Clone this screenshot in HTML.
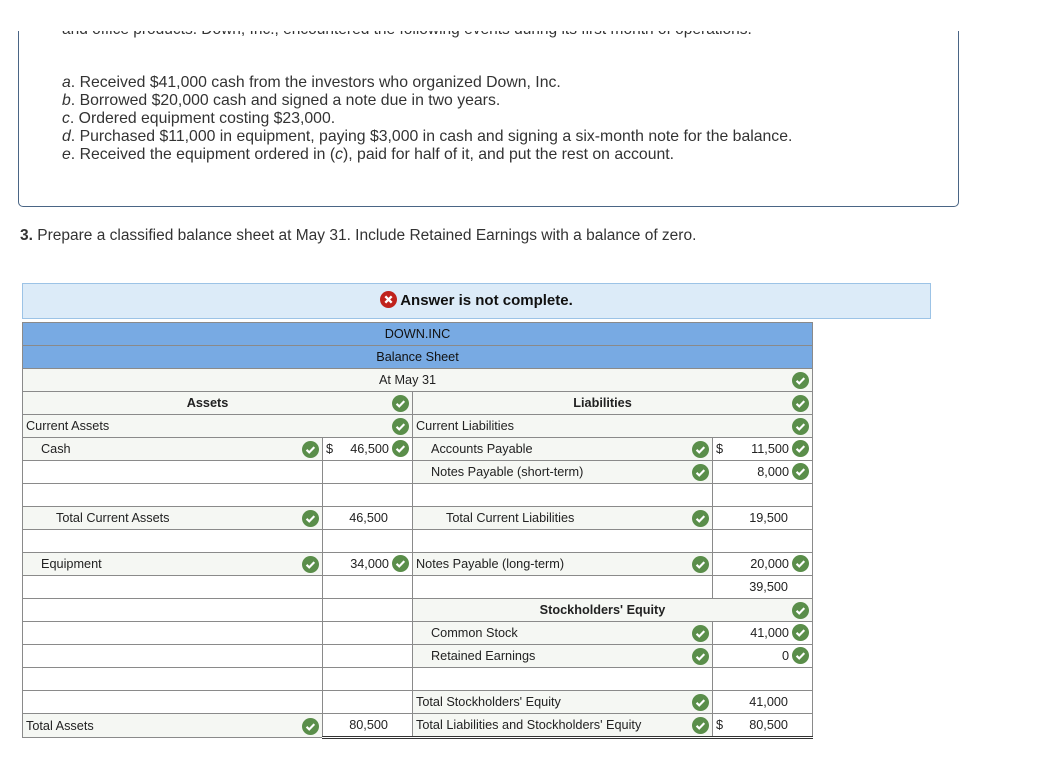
<!DOCTYPE html>
<html><head><meta charset="utf-8"><style>
body{margin:0;width:1048px;height:768px;background:#fff;position:relative;overflow:hidden;font-family:"Liberation Sans",Arial,sans-serif;}
.box{position:absolute;left:18px;top:31px;width:939px;height:175px;border:1px solid #4a6585;border-top:none;border-radius:0 0 5px 5px;overflow:hidden}
.box .cut{position:absolute;left:43px;top:-10px;font-size:15.5px;color:#333;white-space:nowrap}
.items{position:absolute;left:62px;top:74px;font-size:15.8px;line-height:18px;color:#333}
.items i{font-style:italic}
.q{position:absolute;left:20px;top:227px;font-size:15.5px;color:#333}
.ans{position:absolute;left:22px;top:283px;width:907px;height:34px;background:#dcebf8;border:1px solid #9cc3e6;text-align:center;font-size:15px;font-weight:bold;line-height:34px;color:#111}
.ans svg{vertical-align:-3px;margin-right:3px}
table{position:absolute;left:22px;top:322px;border-collapse:collapse;table-layout:fixed;font-size:12.7px;color:#222}
td{border:1px solid #8a8a8a;height:22px;padding:0 3px;white-space:nowrap;overflow:hidden;box-sizing:border-box;line-height:22px}
tr{height:23px}
.blue td{background:#78aae3;text-align:center;color:#111}
.l{background:#f5f7f3}
.c{text-align:center}
.b{font-weight:bold}
.in{padding-left:18px}
.in2{padding-left:33px}
.r{text-align:right;padding-right:24px}
.ri{text-align:right;padding-right:3px}
.ck{display:inline-block;width:17px;height:17px;vertical-align:-4px;margin-left:3px}
.fr{float:right;margin-top:3px}
.d{float:left}
.tt{border-top:1.5px solid #222}
.dd{border-bottom:3px double #333}
</style></head><body>
<div class="box"><div class="cut">and office products. Down, Inc., encountered the following events during its first month of operations.</div></div>
<div class="items">
<div><i>a</i>. Received $41,000 cash from the investors who organized Down, Inc.</div>
<div><i>b</i>. Borrowed $20,000 cash and signed a note due in two years.</div>
<div><i>c</i>. Ordered equipment costing $23,000.</div>
<div><i>d</i>. Purchased $11,000 in equipment, paying $3,000 in cash and signing a six-month note for the balance.</div>
<div><i>e</i>. Received the equipment ordered in (<i>c</i>), paid for half of it, and put the rest on account.</div>
</div>
<div class="q"><b>3.</b> Prepare a classified balance sheet at May 31. Include Retained Earnings with a balance of zero.</div>
<div class="ans"><svg width="17" height="17" viewBox="0 0 16 16"><circle cx="8" cy="8" r="8" fill="#c0221c"/><path d="M5 5l6 6M11 5l-6 6" stroke="#fff" stroke-width="2.2"/></svg>Answer is not complete.</div>

<svg width="0" height="0" style="position:absolute"><defs><symbol id="k" viewBox="0 0 16 16"><circle cx="8" cy="8" r="8" fill="#5a8e4a"/><path d="M4.3 8.3l2.5 2.4 4.8-4.9" stroke="#fff" stroke-width="2" fill="none"/></symbol></defs></svg>

<table>
<colgroup><col style="width:300px"><col style="width:90px"><col style="width:300px"><col style="width:100px"></colgroup>
<tr class="blue"><td colspan="4">DOWN.INC</td></tr>
<tr class="blue"><td colspan="4">Balance Sheet</td></tr>
<tr><td colspan="4" class="l c">At May 31<svg class="ck fr" style="margin-right:0"><use href="#k"/></svg></td></tr>
<tr><td colspan="2" class="l c b">Assets<svg class="ck fr"><use href="#k"/></svg></td><td colspan="2" class="l c b">Liabilities<svg class="ck fr"><use href="#k"/></svg></td></tr>
<tr><td colspan="2" class="l">Current Assets<svg class="ck fr"><use href="#k"/></svg></td><td colspan="2" class="l">Current Liabilities<svg class="ck fr"><use href="#k"/></svg></td></tr>
<tr><td class="l in">Cash<svg class="ck fr"><use href="#k"/></svg></td><td class="ri"><span class="d">$</span>46,500<svg class="ck"><use href="#k"/></svg></td><td class="l in">Accounts Payable<svg class="ck fr"><use href="#k"/></svg></td><td class="ri"><span class="d">$</span>11,500<svg class="ck"><use href="#k"/></svg></td></tr>
<tr><td></td><td></td><td class="l in">Notes Payable (short-term)<svg class="ck fr"><use href="#k"/></svg></td><td class="ri">8,000<svg class="ck"><use href="#k"/></svg></td></tr>
<tr><td></td><td></td><td></td><td></td></tr>
<tr><td class="l in2">Total Current Assets<svg class="ck fr"><use href="#k"/></svg></td><td class="r tt">46,500</td><td class="l in2">Total Current Liabilities<svg class="ck fr"><use href="#k"/></svg></td><td class="r tt">19,500</td></tr>
<tr><td></td><td></td><td></td><td></td></tr>
<tr><td class="l in">Equipment<svg class="ck fr"><use href="#k"/></svg></td><td class="ri">34,000<svg class="ck"><use href="#k"/></svg></td><td class="l">Notes Payable (long-term)<svg class="ck fr"><use href="#k"/></svg></td><td class="ri">20,000<svg class="ck"><use href="#k"/></svg></td></tr>
<tr><td></td><td></td><td></td><td class="r tt">39,500</td></tr>
<tr><td></td><td></td><td colspan="2" class="l c b">Stockholders' Equity<svg class="ck fr"><use href="#k"/></svg></td></tr>
<tr><td></td><td></td><td class="l in">Common Stock<svg class="ck fr"><use href="#k"/></svg></td><td class="ri">41,000<svg class="ck"><use href="#k"/></svg></td></tr>
<tr><td></td><td></td><td class="l in">Retained Earnings<svg class="ck fr"><use href="#k"/></svg></td><td class="ri">0<svg class="ck"><use href="#k"/></svg></td></tr>
<tr><td></td><td></td><td></td><td></td></tr>
<tr><td></td><td></td><td class="l">Total Stockholders' Equity<svg class="ck fr"><use href="#k"/></svg></td><td class="r tt">41,000</td></tr>
<tr><td class="l">Total Assets<svg class="ck fr"><use href="#k"/></svg></td><td class="r tt dd">80,500</td><td class="l dd">Total Liabilities and Stockholders' Equity<svg class="ck fr"><use href="#k"/></svg></td><td class="r tt dd"><span class="d">$</span>80,500</td></tr>
</table>
</body></html>
